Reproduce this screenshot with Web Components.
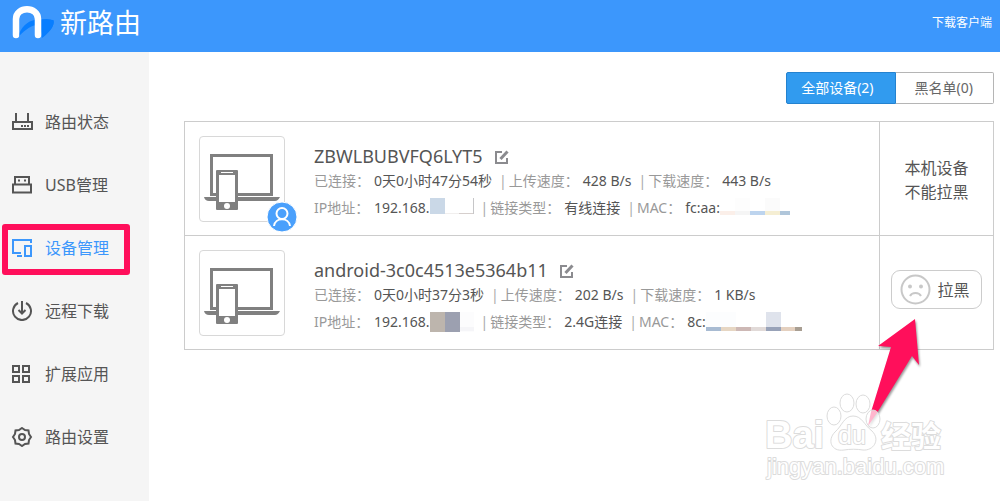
<!DOCTYPE html>
<html lang="zh-CN">
<head>
<meta charset="utf-8">
<title>新路由</title>
<style>
  body {
    margin: 0;
    background: #fff;
    color: #555;
    font: 14px/24px "Noto Sans", "Noto Sans CJK SC", sans-serif;
  }
</style>
</head>
<body>
<router-app>
  <router-header slot="header"></router-header>
  <side-nav slot="nav">
    <nav-item icon="router">路由状态</nav-item>
    <nav-item icon="usb">USB管理</nav-item>
    <nav-item icon="devices" active>设备管理</nav-item>
    <nav-item icon="download">远程下载</nav-item>
    <nav-item icon="apps">扩展应用</nav-item>
    <nav-item icon="settings">路由设置</nav-item>
  </side-nav>
  <device-tabs></device-tabs>
  <device-list>
    <device-row name="ZBWLBUBVFQ6LYT5" self>
      <device-fact slot="speed" label="已连接" first>0天0小时47分54秒</device-fact>
      <device-fact slot="speed" label="上传速度">428 B/s</device-fact>
      <device-fact slot="speed" label="下载速度">443 B/s</device-fact>
      <device-fact slot="link" label="IP地址" first>192.168.<pixel-mask kind="ip1"></pixel-mask></device-fact>
      <device-fact slot="link" label="链接类型">有线连接</device-fact>
      <device-fact slot="link" label="MAC">fc:aa:<pixel-mask kind="mac1"></pixel-mask></device-fact>
      <span slot="action">本机设备<br>不能拉黑</span>
    </device-row>
    <device-row name="android-3c0c4513e5364b11">
      <device-fact slot="speed" label="已连接" first>0天0小时37分3秒</device-fact>
      <device-fact slot="speed" label="上传速度">202 B/s</device-fact>
      <device-fact slot="speed" label="下载速度">1 KB/s</device-fact>
      <device-fact slot="link" label="IP地址" first>192.168.<pixel-mask kind="ip2"></pixel-mask></device-fact>
      <device-fact slot="link" label="链接类型">2.4G连接</device-fact>
      <device-fact slot="link" label="MAC">8c:<pixel-mask kind="mac2"></pixel-mask></device-fact>
      <block-button slot="action">拉黑</block-button>
    </device-row>
  </device-list>
  <page-marks slot="marks"></page-marks>
</router-app>

<script>
// Every element only renders once, so a small helper is enough.
function define(tag, render) {
  customElements.define(tag, class extends HTMLElement {
    constructor() {
      super();
      this.attachShadow({ mode: "open" });
    }
    connectedCallback() {
      this.shadowRoot.innerHTML = render(this);
    }
  });
}

const icons = {
  router: `<path d="M2 10h19v7H2zM5 1v9M17 1v9"/><path d="M10 14h2m1 0h2m1 0h2"/>`,
  usb: `<path d="M4 9V2h14v7M2 9.500h18v8H2z"/><path d="M7 5.500h2m4 0h2"/>`,
  devices: `<path d="M20 5V2H2v13h8M6 18h5M14 8h6v10h-6z"/>`,
  download: `<path d="M7 2a9 9 0 1 0 8 0M11 0v12M7.500 9l3.500 3.500L14.500 9"/>`,
  apps: `<path d="M2 2h6v6H2zM12 2h6v6h-6zM2 12h6v6H2zM12 12h6v6h-6z"/>`,
  settings: `<circle cx="11" cy="10" r="3"/><path d="M11 1l3 2 3.500 .500L18 7l2 3-2 3-.500 3.500L14 17l-3 2-3-2-3.500-.500L4 13l-2-3 2-3 .500-3.500L8 3z"/>`
};

// [x, y, width, height, colour]
const masks = {
  ip1: { width: 44, cells: [[0, 0, 15, 16, "#cad8e7"], [15, 15, 14, 1, "#f1efee"], [29, 15, 15, 1, "#d6cfcd"], [43, 0, 1, 16, "#c6c6c8"]] },
  mac1: { width: 70, cells: [[15, 0, 15, 13, "#fdfdfd"], [45, 0, 15, 13, "#fbfbfb"], [0, 13, 15, 4, "#fbefe9"], [15, 13, 15, 4, "#f5f5f5"], [30, 13, 15, 4, "#bdd4ee"], [45, 13, 15, 4, "#f5eed3"], [60, 13, 10, 4, "#b0c6da"]] },
  ip2: { width: 44, cells: [[0, 0, 15, 20, "#bdb5ad"], [15, 0, 15, 20, "#9ca0b0"], [30, 0, 14, 20, "#fcfcfd"], [30, 15, 14, 4, "#f5f5f8"]] },
  mac2: { width: 96, cells: [[0, 0, 30, 15, "#fcfdfe"], [60, 0, 15, 15, "#dfe3ec"], [0, 15, 15, 4, "#a8bbd2"], [15, 15, 15, 4, "#e6d6c3"], [30, 15, 15, 4, "#cdb8b5"], [45, 15, 15, 4, "#e1dad8"], [60, 15, 15, 4, "#98a2b8"], [75, 15, 14, 4, "#e4d0bf"], [89, 15, 7, 4, "#a89e92"]] }
};

define("router-app", () => `
  <style>
    :host {
      display: flex;
      flex-direction: column;
      min-height: 100vh;
      position: relative;
    }
    .body {
      display: flex;
      flex: 1;
    }
    main {
      flex: 1;
      min-width: 0;
      display: flex;
      flex-direction: column;
      gap: 17px;
      padding: 20px 6px 24px 35px;
    }
  </style>
  <slot name="header"></slot>
  <div class="body">
    <slot name="nav"></slot>
    <main><slot></slot></main>
  </div>
  <slot name="marks"></slot>
`);

define("router-header", () => `
  <style>
    :host { display: block; }
    header {
      display: flex;
      align-items: center;
      justify-content: space-between;
      height: 52px;
      box-sizing: border-box;
      padding: 0 8px 6px 12px;
      background: #3c97fc;
      color: #fff;
    }
    .brand {
      display: flex;
      align-items: center;
      gap: 6px;
      font-size: 27px;
      line-height: 36px;
    }
    svg { display: block; }
    a {
      color: #fff;
      font-size: 12px;
      line-height: 20px;
      text-decoration: none;
    }
  </style>
  <header>
    <div class="brand">
      <svg width="42" height="36" viewBox="0 0 42 36" fill="none">
        <path d="M7 29C11 19 19 14 28 14.500L41.500 15C43 21 37 27 31 32L30 22C25 17 16 22 7 31z" fill="#087eff"/>
        <path d="M28 15c6-2 11-1 13.500 1 1 5-5 12-11.500 17z" fill="#087eff"/>
        <path d="M4 30V14C4 1 26 1 26 14v16" stroke="#fff" stroke-width="6.500" stroke-linecap="round"/>
      </svg>
      <span>新路由</span>
    </div>
    <a href="#client">下载客户端</a>
  </header>
`);

define("side-nav", () => `
  <style>
    :host {
      display: block;
      width: 149px;
      flex: none;
      background: #f5f5f5;
    }
    nav { padding-top: 38px; }
  </style>
  <nav><slot></slot></nav>
`);

define("nav-item", el => `
  <style>
    :host {
      display: block;
      position: relative;
      color: #555;
    }
    :host([active]) { color: #3c97fc; }
    a {
      display: flex;
      align-items: center;
      gap: 12px;
      height: 63px;
      padding-left: 11px;
      color: inherit;
      font-size: 16px;
      text-decoration: none;
    }
    svg {
      fill: none;
      stroke: currentColor;
      stroke-width: 2;
    }
    .mark {
      position: absolute;
      inset: 8px 19px 4px 2px;
      border: 6px solid #ff0f5b;
      border-radius: 3px;
      pointer-events: none;
    }
  </style>
  <a href="#${el.getAttribute("icon")}">
    <svg width="22" height="20" viewBox="0 0 22 20">${icons[el.getAttribute("icon")]}</svg>
    <slot></slot>
  </a>
  ${el.hasAttribute("active") ? `<div class="mark"></div>` : ""}
`);

define("device-tabs", () => `
  <style>
    :host {
      display: flex;
      justify-content: flex-end;
    }
    button {
      height: 32px;
      padding: 0 20px 0 19px;
      border: 1px solid #b5b5b5;
      border-left: 0;
      border-radius: 0 2px 2px 0;
      background: #fff;
      color: #666;
      font: inherit;
    }
    .on {
      padding: 0 21px 0 14px;
      border: 1px solid #2482cf;
      border-radius: 2px 0 0 2px;
      background: #319bef;
      color: #fff;
    }
  </style>
  <button class="on">全部设备(2)</button><button>黑名单(0)</button>
`);

define("device-list", () => `
  <style>
    :host {
      display: block;
      border: 1px solid #ccc;
      border-bottom: 0;
    }
  </style>
  <slot></slot>
`);

define("device-row", el => `
  <style>
    :host {
      display: flex;
      border-bottom: 1px solid #ccc;
    }
    .thumb {
      position: relative;
      flex: none;
      width: 84px;
      height: 84px;
      margin: 14px 0 13px 14px;
      border: 1px solid #d8d8d8;
      border-radius: 4px;
    }
    .thumb svg { display: block; }
    .badge {
      position: absolute;
      right: -14px;
      bottom: -12px;
    }
    .info {
      flex: 1;
      min-width: 0;
      padding: 22px 0 0 29px;
    }
    .title {
      display: flex;
      align-items: center;
      gap: 12px;
    }
    h2 {
      margin: 0;
      font-size: 18px;
      font-weight: 400;
      line-height: 25px;
    }
    button {
      display: block;
      padding: 0;
      border: 0;
      background: none;
    }
    button svg { display: block; }
    .facts {
      display: flex;
      height: 24px;
      white-space: nowrap;
    }
    .link { margin-top: 3px; }
    .action {
      display: flex;
      flex: none;
      align-items: flex-start;
      justify-content: center;
      width: 113px;
      padding-top: 34px;
      border-left: 1px solid #ccc;
      font-size: 16px;
      text-align: center;
    }
  </style>
  <div class="thumb">
    <svg width="84" height="84" viewBox="0 0 84 84" fill="none">
      <path d="M11.500 18.500h60v39h-60z" stroke="#808080" stroke-width="3"/>
      <path d="M4 60h76q-2 4-5 4H9q-4 0-5-4z" fill="#808080"/>
      <rect x="16" y="33" width="22" height="40" rx="1" fill="#808080"/>
      <path d="M19 38h16v27H19zM21 35h12v1H21z" fill="#fff"/>
      <circle cx="27" cy="69" r="3" fill="#fff"/>
    </svg>
    ${el.hasAttribute("self") ? `
      <svg class="badge" width="32" height="32" viewBox="0 0 32 32" fill="none">
        <circle cx="16" cy="16" r="15" fill="#4aa0fc" stroke="#fff"/>
        <g stroke="#fff" stroke-width="2"><circle cx="16" cy="12.500" r="5.500"/><path d="M8 25c1-9 15-9 16 0"/></g>
      </svg>` : ""}
  </div>
  <div class="info">
    <div class="title">
      <h2>${el.getAttribute("name")}</h2>
      <button aria-label="编辑名称">
        <svg width="14" height="14" viewBox="0 0 14 14" fill="none" stroke="#8b8b8f" stroke-width="2">
          <path d="M7 2H1v11h11V8"/><path d="M5.500 9L12.500 1.500" stroke-width="3"/>
        </svg>
      </button>
    </div>
    <div class="facts"><slot name="speed"></slot></div>
    <div class="facts link"><slot name="link"></slot></div>
  </div>
  <div class="action"><slot name="action"></slot></div>
`);

define("device-fact", el => `
  <style>
    :host {
      display: flex;
      color: #555;
    }
    .sep {
      margin: 0 2px 0 7px;
      color: #aaa;
    }
    .label {
      margin-right: 4px;
      color: #999;
    }
    .first { min-width: 56px; }
    .value { display: flex; }
  </style>
  ${el.hasAttribute("first") ? "" : `<span class="sep">|</span>`}
  <span class="label ${el.hasAttribute("first") ? "first" : ""}">${el.getAttribute("label")}：</span>
  <span class="value"><slot></slot></span>
`);

define("pixel-mask", el => {
  const { width, cells } = masks[el.getAttribute("kind")];
  return `
    <style>
      :host {
        display: block;
        padding-top: 2px;
      }
      svg { display: block; }
    </style>
    <svg width="${width}" height="20" shape-rendering="crispEdges">
      ${cells.map(([x, y, w, h, c]) => `<rect x="${x}" y="${y}" width="${w}" height="${h}" fill="${c}"/>`).join("")}
    </svg>
  `;
});

define("block-button", () => `
  <style>
    :host { display: block; }
    button {
      display: flex;
      align-items: center;
      gap: 6px;
      height: 39px;
      padding: 0 11px 0 8px;
      border: 1px solid #ccc;
      border-radius: 9px;
      background: #fff;
      color: #555;
      font: inherit;
    }
  </style>
  <button>
    <svg width="31" height="31" viewBox="0 0 31 31" fill="none" stroke="#c8c8c8" stroke-width="2">
      <circle cx="15.500" cy="15.500" r="14"/>
      <path d="M10 22c2-4 9-4 11 0"/>
      <g fill="#c8c8c8" stroke="none"><circle cx="10" cy="12.500" r="2"/><circle cx="21" cy="12.500" r="2"/></g>
    </svg>
    <slot></slot>
  </button>
`);

// Pointer arrow and watermark float over the page.
define("page-marks", () => `
  <style>
    :host {
      position: absolute;
      top: 310px;
      right: 50px;
      pointer-events: none;
    }
    svg { display: block; }
    .arrow { filter: drop-shadow(1px 2px 1px rgb(0 0 0 / 40%)); }
    text {
      fill: #fff;
      stroke: #dcdcdc;
      stroke-width: 2;
      stroke-linejoin: round;
      paint-order: stroke;
      font-family: "Liberation Sans", "Noto Sans CJK SC", sans-serif;
    }
  </style>
  <svg width="190" height="175" viewBox="760 310 190 175">
    <path class="arrow" d="M915 319L919 365L912 356L877 413L868 426L871 412L891 347L878 346z" fill="#ff0f5b"/>
    <g fill="#fff" fill-opacity=".7" stroke="#dcdcdc">
      <ellipse cx="834" cy="416" rx="7" ry="9"/>
      <ellipse cx="847" cy="403" rx="7" ry="9"/>
      <ellipse cx="863" cy="404" rx="7" ry="9"/>
      <ellipse cx="873" cy="419" rx="7" ry="9"/>
      <path d="M853 416C862 416 864 425 872 431C881 440 873 451 863 450C857 449 850 449 844 450C831 452 827 440 835 432C842 426 844 416 853 416z"/>
    </g>
    <text x="765" y="448" font-size="38" font-weight="700">Bai</text>
    <text x="838" y="444" font-size="25">du</text>
    <text x="881" y="447" font-size="30" font-weight="700">经验</text>
    <text x="767" y="474" font-size="22">jingyan.baidu.com</text>
  </svg>
`);
</script>
</body>
</html>
